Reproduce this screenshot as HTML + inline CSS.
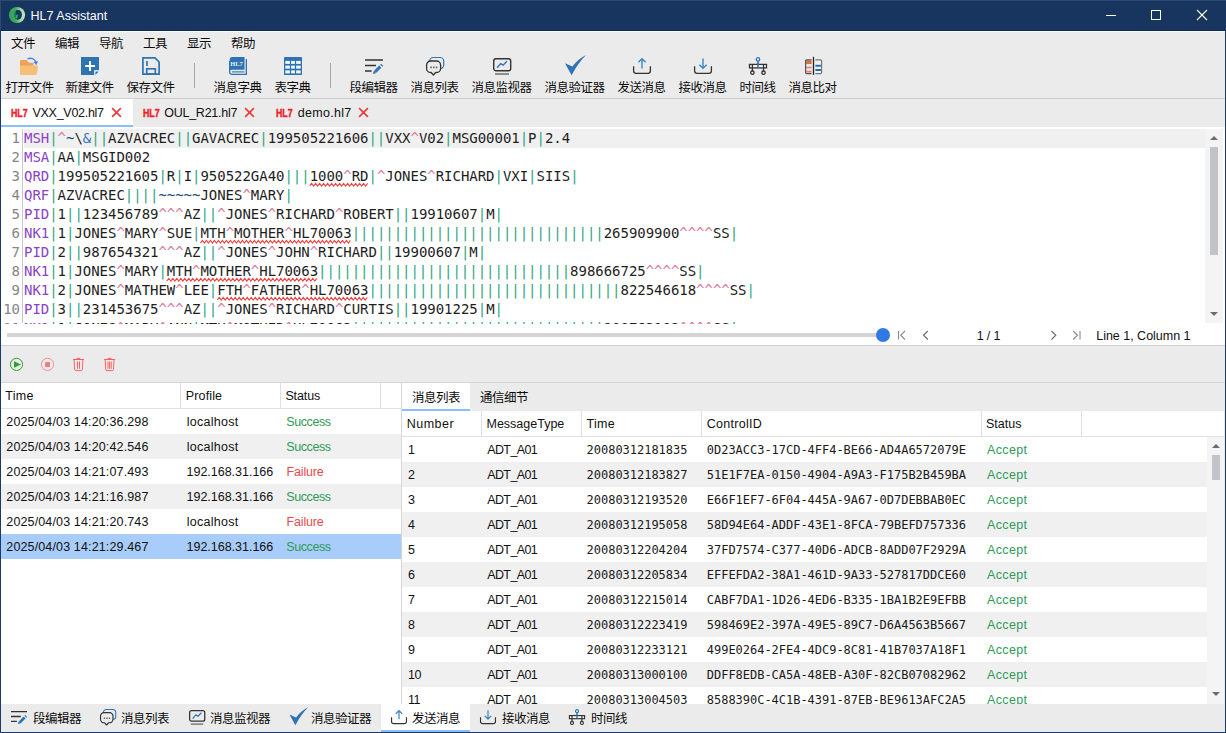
<!DOCTYPE html>
<html><head><meta charset="utf-8"><title>HL7 Assistant</title>
<style>
*{box-sizing:border-box;margin:0;padding:0}
html,body{width:1226px;height:733px;overflow:hidden;background:#ebebeb}
body{font-family:"Liberation Sans","Noto Sans CJK SC",sans-serif;font-size:12px;color:#111;position:relative}
.a{position:absolute}
#win{position:absolute;left:0;top:0;width:1226px;height:733px;background:#ebebeb;overflow:hidden}
#title{position:absolute;left:0;top:0;width:1226px;height:30px;background:#17355f;border-top:1px solid #2c4a74;border-left:1px solid #2c4a74}
.bl{position:absolute;left:0;top:30px;width:1px;height:703px;background:#1b3a66}
.br{position:absolute;left:1225px;top:30px;width:1px;height:703px;background:#1b3a66}
.bb{position:absolute;left:0;top:732px;width:1226px;height:1px;background:#1b3a66}
.cj{position:absolute;font-family:"Liberation Sans","Noto Sans CJK SC",sans-serif;font-size:12.500px;letter-spacing:-.5px;line-height:16px;white-space:nowrap;color:#0c0c0c;font-weight:400}
.sep{position:absolute;top:63px;width:1px;height:25px;background:#a8a8a8}
.x{position:absolute;font-family:"Liberation Sans",sans-serif;font-size:12.500px;line-height:15px;white-space:pre;color:#111}
.hl{position:absolute;top:106.500px;font-family:"Liberation Sans",sans-serif;font-weight:bold;color:#e9242c;font-size:11px;line-height:13px;transform-origin:0 50%;transform:scaleX(.8);white-space:nowrap;-webkit-text-stroke:.45px #e9242c}
#ed{position:absolute;left:1px;top:127px;width:1224px;height:218px;background:#fff;overflow:hidden}
#edc{position:absolute;left:0;top:0;width:1204px;height:197px;overflow:hidden}
.ln{position:absolute;left:0;height:19px;white-space:pre;font-family:"DejaVu Sans Mono","Liberation Mono",monospace;font-size:14px;letter-spacing:-.029px;line-height:19px;color:#1e1e1e}
.ln .n{position:absolute;left:0;width:19px;text-align:right;color:#858585;top:0}
.ln .c{position:absolute;left:23px;top:0}
.sg{color:#8a42c6}.p{color:#2ea67f}.k{color:#dc7a9f}.t{color:#23506e}.am{color:#3a6fc4}
.mono{position:absolute;font-family:"DejaVu Sans Mono","Liberation Mono",monospace;font-size:12px;letter-spacing:-.025px;line-height:15px;white-space:pre;color:#1a1a1a}
.ok{color:#2f9a58}.bad{color:#ea4a50}
.vd{position:absolute;width:1px;background:#e0e0e0}
</style></head><body>
<div id="win">
<div id="title"></div>
<svg class="a" style="left:8px;top:6px" width="18" height="18" viewBox="0 0 18 18"><defs><linearGradient id="tg" x1="0" y1="0" x2="1" y2="0"><stop offset="0" stop-color="#2f9f58"/><stop offset=".45" stop-color="#43ad62"/><stop offset=".75" stop-color="#a5dcae"/><stop offset="1" stop-color="#c4e9c6"/></linearGradient></defs><circle cx="9" cy="9" r="8.100" fill="url(#tg)"/><ellipse cx="9.900" cy="8.800" rx="4" ry="4.900" fill="#17355f"/><path d="M6.900 5V11.800H7.900M8.300 9.300H10.300M8.500 9.300V12.600M8.500 10.900H9.900" stroke="#2fae55" stroke-width="1.100" fill="none"/></svg>
<div class="x " style="left:30.5px;top:9px;letter-spacing:0.03px;color:#fff;">HL7 Assistant</div>
<svg class="a" style="left:1100px;top:0" width="126" height="30" viewBox="0 0 126 30"><path d="M6 15.500h10" stroke="#fff" stroke-width="1"/><rect x="51.500" y="10.500" width="9" height="9" fill="none" stroke="#fff" stroke-width="1"/><path d="M97 10l10 10M107 10l-10 10" stroke="#fff" stroke-width="1.100"/></svg>
<div class="a" style="left:0;top:30px;width:1226px;height:1px;background:#0c2c5a"></div><div class="a" style="left:1px;top:31px;width:1224px;height:1px;background:#f7f7f7"></div>
<div class="bl"></div><div class="br"></div><div class="bb"></div>
<div class="cj" style="left:11px;top:36px">文件</div>
<div class="cj" style="left:55px;top:36px">编辑</div>
<div class="cj" style="left:99px;top:36px">导航</div>
<div class="cj" style="left:143px;top:36px">工具</div>
<div class="cj" style="left:187px;top:36px">显示</div>
<div class="cj" style="left:231px;top:36px">帮助</div>
<div class="cj" style="left:5.5px;top:80px">打开文件</div>
<div class="cj" style="left:65.5px;top:80px">新建文件</div>
<div class="cj" style="left:126.5px;top:80px">保存文件</div>
<div class="cj" style="left:213.5px;top:80px">消息字典</div>
<div class="cj" style="left:274.5px;top:80px">表字典</div>
<div class="cj" style="left:349.5px;top:80px">段编辑器</div>
<div class="cj" style="left:410.5px;top:80px">消息列表</div>
<div class="cj" style="left:471.5px;top:80px">消息监视器</div>
<div class="cj" style="left:544.5px;top:80px">消息验证器</div>
<div class="cj" style="left:617.5px;top:80px">发送消息</div>
<div class="cj" style="left:678.5px;top:80px">接收消息</div>
<div class="cj" style="left:739.5px;top:80px">时间线</div>
<div class="cj" style="left:788.5px;top:80px">消息比对</div>
<div class="sep" style="left:194px"></div><div class="sep" style="left:330px"></div>
<svg class="a" style="left:0;top:0" width="1226" height="100" viewBox="0 0 1226 100"><g transform="translate(20 57)"><path d="M0 4.2a1.2 1.2 0 0 1 1.2-1.2H6.6L9 5.8H13.600V10H0Z" fill="#f0a256"/><path d="M0 9.400a1 1 0 0 1 1-1H17a1 1 0 0 1 1 1.200L16.800 17a1.200 1.200 0 0 1-1.200 1H1.200A1.200 1.200 0 0 1 0 16.800Z" fill="#f5bf77"/><path d="M7.500 2C10.500.400 15 1.200 16 5.600" fill="none" stroke="#3b82f6" stroke-width="1.400"/><path d="M13.600 4.800L16.300 8.200 18 4.200Z" fill="#3b82f6"/></g><g transform="translate(81 57)"><path d="M0 0H18V18H0Z" fill="#2e74b0"/><path d="M13.200 13.200H18V18H13.200Z" fill="#fff"/><path d="M14.400 14.400H18L14.400 18Z" fill="#2e74b0"/><path d="M18 15.200V18H15.200Z" fill="#ebebeb"/><path d="M4.200 9H14M9 4.100V13.900" stroke="#fff" stroke-width="2" fill="none"/></g><g transform="translate(142 57)"><path d="M.9.900H13L17.100 5V17.100H.9Z" fill="none" stroke="#2e74b5" stroke-width="1.700"/><path d="M5 4V9" stroke="#2e74b5" stroke-width="1.700"/><rect x="4.700" y="11.800" width="8.600" height="5.300" fill="none" stroke="#2e74b5" stroke-width="1.700"/></g><g transform="translate(229 57)"><path d="M2.500 0H15.500V12.800H2.800A2 2 0 0 0 .700 14.800V2.500A2.500 2.500 0 0 1 2.500 0Z" fill="#2e74b5"/><path d="M.650 4V15A2.300 2.300 0 0 0 2.950 17.350H17.350V2" fill="none" stroke="#2e74b5" stroke-width="1.300"/><path d="M3 14.900H15.500" stroke="#2e74b5" stroke-width="1.100"/><text x="1.300" y="8.700" font-family="Liberation Serif,serif" font-weight="bold" font-size="6.400" fill="#e8eef6" textLength="12.500" lengthAdjust="spacingAndGlyphs">HL7</text></g><g transform="translate(284 57)"><rect x="0" y="0" width="18" height="18" rx=".6" fill="#2e74b5"/><rect x="1.3" y="3.9" width="4.6" height="3" fill="#f4f7fb"/><rect x="1.3" y="8.6" width="4.6" height="3" fill="#f4f7fb"/><rect x="1.3" y="13.4" width="4.6" height="3" fill="#f4f7fb"/><rect x="7.1" y="3.9" width="3.8" height="3" fill="#f4f7fb"/><rect x="7.1" y="8.6" width="3.8" height="3" fill="#f4f7fb"/><rect x="7.1" y="13.4" width="3.8" height="3" fill="#f4f7fb"/><rect x="12.1" y="3.9" width="4.6" height="3" fill="#f4f7fb"/><rect x="12.1" y="8.6" width="4.6" height="3" fill="#f4f7fb"/><rect x="12.1" y="13.4" width="4.6" height="3" fill="#f4f7fb"/></g><g transform="translate(365 57)"><path d="M0 3H18M0 8.400H11M0 14H6.600" stroke="#333" stroke-width="1.500" fill="none"/><path d="M9.900 15L15.300 9.600" stroke="#2e74b5" stroke-width="3" fill="none"/><path d="M16.200 8.700L17.100 7.800" stroke="#2e74b5" stroke-width="3" fill="none"/><path d="M7.900 17L8.700 13.900 11 16.200Z" fill="#2e74b5"/></g><g transform="translate(426 57)"><rect x="3.700" y=".5" width="14" height="11.200" rx="3.600" fill="none" stroke="#2e74b5" stroke-width="1.200"/><path d="M4.600 4H10.600A4 4 0 0 1 14.600 8V11.500A4 4 0 0 1 10.600 15.500H9.600L7.400 18 5.200 15.500H4.600A4 4 0 0 1 .6 11.500V8A4 4 0 0 1 4.600 4Z" fill="#ebebeb" stroke="#333" stroke-width="1.300" stroke-linejoin="round"/><path d="M4.200 9.600h1.600v1.600h-1.600zM7 9.600h1.600v1.600H7zM9.800 9.600h1.600v1.600H9.800z" fill="#666"/></g><g transform="translate(493 57)"><rect x=".7" y="1.700" width="17" height="12" rx="2.200" fill="none" stroke="#333" stroke-width="1.400"/><path d="M2 17H16" stroke="#777" stroke-width="1.600"/><path d="M4.100 10.800L7.700 6.600 10.200 8.200 13.900 4.200" fill="none" stroke="#2e74b5" stroke-width="1.400"/></g><g transform="translate(565 57)"><path d="M0 6.300L7.400 9.500Q13 2 21-2Q13 6 6.600 18.200Z" fill="#2e74b5"/></g><g transform="translate(633 57)"><path d="M9 11.500V1.800M5.400 5.300L9 1.700 12.600 5.300" fill="none" stroke="#3f86c6" stroke-width="1.400"/><path d="M.6 9.300V14Q.6 16.400 3.200 16.400H14.800Q17.400 16.400 17.400 14V9.300" fill="none" stroke="#333" stroke-width="1.300"/></g><g transform="translate(694 57)"><path d="M9 1.500V11.200M5.400 7.700L9 11.300 12.600 7.700" fill="none" stroke="#3f86c6" stroke-width="1.400"/><path d="M.6 9.300V14Q.6 16.400 3.200 16.400H14.800Q17.400 16.400 17.400 14V9.300" fill="none" stroke="#333" stroke-width="1.300"/></g><g transform="translate(749 57)"><circle cx="9" cy="2.400" r="1.700" fill="none" stroke="#2e74b5" stroke-width="1.300"/><path d="M9 4.200V8.500" stroke="#2e74b5" stroke-width="1.600"/><rect x=".5" y="7.400" width="17" height="3.500" fill="#f6f6f6" stroke="#333" stroke-width="1.300"/><path d="M3.400 7.400V13.900M14.500 7.400V13.900" stroke="#333" stroke-width="1.300"/><path d="M9 7V10" stroke="#2e74b5" stroke-width="1.600"/><circle cx="3.400" cy="15.700" r="1.700" fill="none" stroke="#333" stroke-width="1.300"/><circle cx="14.500" cy="15.700" r="1.700" fill="none" stroke="#333" stroke-width="1.300"/></g><g transform="translate(805 57)"><path d="M8.500-.2V17.800" stroke="#222" stroke-width="1.300"/><rect x="1.200" y="3.500" width="5.400" height="3.700" fill="#d9713e"/><rect x="1.200" y="7.300" width="5.400" height="2.300" fill="#e6eef0"/><rect x="1.200" y="9.700" width="5.400" height="1.800" fill="#f07a6e"/><rect x="1.200" y="11.600" width="5.400" height="2" fill="#e6eef0"/><rect x="1.200" y="13.700" width="5.400" height="1.800" fill="#f07a6e"/><rect x="10.400" y="3.500" width="5.500" height="4.200" fill="#eef2f4"/><rect x="10.400" y="7.800" width="5.500" height="2" fill="#1f6fb5"/><rect x="10.400" y="9.900" width="5.500" height="2" fill="#eef2f4"/><rect x="10.400" y="12" width="5.500" height="2" fill="#1f6fb5"/><rect x="10.400" y="14.100" width="5.500" height="1.900" fill="#eef2f4"/><path d="M6.600 2.900H1.600Q.6 2.900.6 3.900V15.600Q.6 16.600 1.600 16.600H6.600" fill="none" stroke="#555" stroke-width="1.200"/><path d="M10.400 2.900H15.600Q16.600 2.900 16.600 3.900V15.600Q16.600 16.600 15.600 16.600H10.400" fill="none" stroke="#777" stroke-width="1.200"/></g></svg>
<div class="a" style="left:1px;top:98px;width:1224px;height:1px;background:#d0d0d0"></div>
<div class="a" style="left:1px;top:99px;width:132px;height:28px;background:#fff"></div>
<div class="a" style="left:1px;top:125px;width:132px;height:2px;background:#8dbff7"></div>
<div class="hl" style="left:10.5px">HL7</div>
<div class="x " style="left:32.5px;top:106px;letter-spacing:-0.28px;">VXX_V02.hl7</div>
<svg class="a" style="left:110.5px;top:107px" width="11" height="11" viewBox="0 0 11 11"><path d="M1.100 1.100l8.800 8.800M9.900 1.100l-8.800 8.800" stroke="#f03a3a" stroke-width="1.600" fill="none"/></svg>
<div class="hl" style="left:142.5px">HL7</div>
<div class="x " style="left:164.3px;top:106px;letter-spacing:-0.27px;">OUL_R21.hl7</div>
<svg class="a" style="left:243.7px;top:107px" width="11" height="11" viewBox="0 0 11 11"><path d="M1.100 1.100l8.800 8.800M9.900 1.100l-8.800 8.800" stroke="#f03a3a" stroke-width="1.600" fill="none"/></svg>
<div class="hl" style="left:275.5px">HL7</div>
<div class="x " style="left:297.8px;top:106px;letter-spacing:0.28px;">demo.hl7</div>
<svg class="a" style="left:357.8px;top:107px" width="11" height="11" viewBox="0 0 11 11"><path d="M1.100 1.100l8.800 8.800M9.900 1.100l-8.800 8.800" stroke="#f03a3a" stroke-width="1.600" fill="none"/></svg>
<div id="ed">
<div class="a" style="left:23px;top:2px;width:1181px;height:19px;background:#f0f0f0"></div>
<div id="edc">
<div class="a" style="left:21px;top:2px;width:1px;height:194px;background:#c8c8c8"></div>
<div class="ln" style="top:2px"><span class="n">1</span><span class="c"><span class="sg">MSH</span><span class="p">|</span><span class="k">^</span><span class="t">~</span>\<span class="am">&amp;</span><span class="p">||</span>AZVACREC<span class="p">||</span>GAVACREC<span class="p">|</span>199505221606<span class="p">||</span>VXX<span class="k">^</span>V02<span class="p">|</span>MSG00001<span class="p">|</span>P<span class="p">|</span>2.4</span></div>
<div class="ln" style="top:21px"><span class="n">2</span><span class="c"><span class="sg">MSA</span><span class="p">|</span>AA<span class="p">|</span>MSGID002</span></div>
<div class="ln" style="top:40px"><span class="n">3</span><span class="c"><span class="sg">QRD</span><span class="p">|</span>199505221605<span class="p">|</span>R<span class="p">|</span>I<span class="p">|</span>950522GA40<span class="p">|||</span><span>1000<span class="k">^</span>RD</span><span class="p">|</span><span class="k">^</span>JONES<span class="k">^</span>RICHARD<span class="p">|</span>VXI<span class="p">|</span>SIIS<span class="p">|</span></span></div>
<div class="ln" style="top:59px"><span class="n">4</span><span class="c"><span class="sg">QRF</span><span class="p">|</span>AZVACREC<span class="p">||||</span><span class="t">~~~~~</span>JONES<span class="k">^</span>MARY<span class="p">|</span></span></div>
<div class="ln" style="top:78px"><span class="n">5</span><span class="c"><span class="sg">PID</span><span class="p">|</span>1<span class="p">||</span>123456789<span class="k">^^^</span>AZ<span class="p">||</span><span class="k">^</span>JONES<span class="k">^</span>RICHARD<span class="k">^</span>ROBERT<span class="p">||</span>19910607<span class="p">|</span>M<span class="p">|</span></span></div>
<div class="ln" style="top:97px"><span class="n">6</span><span class="c"><span class="sg">NK1</span><span class="p">|</span>1<span class="p">|</span>JONES<span class="k">^</span>MARY<span class="k">^</span>SUE<span class="p">|</span><span>MTH<span class="k">^</span>MOTHER<span class="k">^</span>HL70063</span><span class="p">||||||||||||||||||||||||||||||</span>265909900<span class="k">^^^^</span>SS<span class="p">|</span></span></div>
<div class="ln" style="top:116px"><span class="n">7</span><span class="c"><span class="sg">PID</span><span class="p">|</span>2<span class="p">||</span>987654321<span class="k">^^^</span>AZ<span class="p">||</span><span class="k">^</span>JONES<span class="k">^</span>JOHN<span class="k">^</span>RICHARD<span class="p">||</span>19900607<span class="p">|</span>M<span class="p">|</span></span></div>
<div class="ln" style="top:135px"><span class="n">8</span><span class="c"><span class="sg">NK1</span><span class="p">|</span>1<span class="p">|</span>JONES<span class="k">^</span>MARY<span class="p">|</span><span>MTH<span class="k">^</span>MOTHER<span class="k">^</span>HL70063</span><span class="p">||||||||||||||||||||||||||||||</span>898666725<span class="k">^^^^</span>SS<span class="p">|</span></span></div>
<div class="ln" style="top:154px"><span class="n">9</span><span class="c"><span class="sg">NK1</span><span class="p">|</span>2<span class="p">|</span>JONES<span class="k">^</span>MATHEW<span class="k">^</span>LEE<span class="p">|</span><span>FTH<span class="k">^</span>FATHER<span class="k">^</span>HL70063</span><span class="p">||||||||||||||||||||||||||||||</span>822546618<span class="k">^^^^</span>SS<span class="p">|</span></span></div>
<div class="ln" style="top:173px"><span class="n">10</span><span class="c"><span class="sg">PID</span><span class="p">|</span>3<span class="p">||</span>231453675<span class="k">^^^</span>AZ<span class="p">||</span><span class="k">^</span>JONES<span class="k">^</span>RICHARD<span class="k">^</span>CURTIS<span class="p">||</span>19901225<span class="p">|</span>M<span class="p">|</span></span></div>
<div class="ln" style="top:192px"><span class="n">11</span><span class="c"><span class="sg">NK1</span><span class="p">|</span>1<span class="p">|</span>JONES<span class="k">^</span>MARY<span class="k">^</span>ANN<span class="p">|</span><span>MTH<span class="k">^</span>MOTHER<span class="k">^</span>HL70063</span><span class="p">||||||||||||||||||||||||||||||</span>288763102<span class="k">^^^^</span>SS<span class="p">|</span></span></div>
<svg class="a" style="left:0;top:0" width="1207" height="196" viewBox="0 0 1207 196"><path d="M308.6 59L310.6 56.4L312.6 59L314.6 56.4L316.6 59L318.6 56.4L320.6 59L322.6 56.4L324.6 59L326.6 56.4L328.6 59L330.6 56.4L332.6 59L334.6 56.4L336.6 59L338.6 56.4L340.6 59L342.6 56.4L344.6 59L346.6 56.4L348.6 59L350.6 56.4L352.6 59L354.6 56.4L356.6 59L358.6 56.4L360.6 59L362.6 56.4L364.6 59L366.6 56.4" fill="none" stroke="#f04040" stroke-width="1.100"/><path d="M199.4 116L201.4 113.4L203.4 116L205.4 113.4L207.4 116L209.4 113.4L211.4 116L213.4 113.4L215.4 116L217.4 113.4L219.4 116L221.4 113.4L223.4 116L225.4 113.4L227.4 116L229.4 113.4L231.4 116L233.4 113.4L235.4 116L237.4 113.4L239.4 116L241.4 113.4L243.4 116L245.4 113.4L247.4 116L249.4 113.4L251.4 116L253.4 113.4L255.4 116L257.4 113.4L259.4 116L261.4 113.4L263.4 116L265.4 113.4L267.4 116L269.4 113.4L271.4 116L273.4 113.4L275.4 116L277.4 113.4L279.4 116L281.4 113.4L283.4 116L285.4 113.4L287.4 116L289.4 113.4L291.4 116L293.4 113.4L295.4 116L297.4 113.4L299.4 116L301.4 113.4L303.4 116L305.4 113.4L307.4 116L309.4 113.4L311.4 116L313.4 113.4L315.4 116L317.4 113.4L319.4 116L321.4 113.4L323.4 116L325.4 113.4L327.4 116L329.4 113.4L331.4 116L333.4 113.4L335.4 116L337.4 113.4L339.4 116L341.4 113.4L343.4 116L345.4 113.4L347.4 116L349.4 113.4" fill="none" stroke="#f04040" stroke-width="1.100"/><path d="M165.8 154L167.8 151.4L169.8 154L171.8 151.4L173.8 154L175.8 151.4L177.8 154L179.8 151.4L181.8 154L183.8 151.4L185.8 154L187.8 151.4L189.8 154L191.8 151.4L193.8 154L195.8 151.4L197.8 154L199.8 151.4L201.8 154L203.8 151.4L205.8 154L207.8 151.4L209.8 154L211.8 151.4L213.8 154L215.8 151.4L217.8 154L219.8 151.4L221.8 154L223.8 151.4L225.8 154L227.8 151.4L229.8 154L231.8 151.4L233.8 154L235.8 151.4L237.8 154L239.8 151.4L241.8 154L243.8 151.4L245.8 154L247.8 151.4L249.8 154L251.8 151.4L253.8 154L255.8 151.4L257.8 154L259.8 151.4L261.8 154L263.8 151.4L265.8 154L267.8 151.4L269.8 154L271.8 151.4L273.8 154L275.8 151.4L277.8 154L279.8 151.4L281.8 154L283.8 151.4L285.8 154L287.8 151.4L289.8 154L291.8 151.4L293.8 154L295.8 151.4L297.8 154L299.8 151.4L301.8 154L303.8 151.4L305.8 154L307.8 151.4L309.8 154L311.8 151.4L313.8 154L315.8 151.4" fill="none" stroke="#f04040" stroke-width="1.100"/><path d="M216.2 173L218.2 170.4L220.2 173L222.2 170.4L224.2 173L226.2 170.4L228.2 173L230.2 170.4L232.2 173L234.2 170.4L236.2 173L238.2 170.4L240.2 173L242.2 170.4L244.2 173L246.2 170.4L248.2 173L250.2 170.4L252.2 173L254.2 170.4L256.2 173L258.2 170.4L260.2 173L262.2 170.4L264.2 173L266.2 170.4L268.2 173L270.2 170.4L272.2 173L274.2 170.4L276.2 173L278.2 170.4L280.2 173L282.2 170.4L284.2 173L286.2 170.4L288.2 173L290.2 170.4L292.2 173L294.2 170.4L296.2 173L298.2 170.4L300.2 173L302.2 170.4L304.2 173L306.2 170.4L308.2 173L310.2 170.4L312.2 173L314.2 170.4L316.2 173L318.2 170.4L320.2 173L322.2 170.4L324.2 173L326.2 170.4L328.2 173L330.2 170.4L332.2 173L334.2 170.4L336.2 173L338.2 170.4L340.2 173L342.2 170.4L344.2 173L346.2 170.4L348.2 173L350.2 170.4L352.2 173L354.2 170.4L356.2 173L358.2 170.4L360.2 173L362.2 170.4L364.2 173L366.2 170.4" fill="none" stroke="#f04040" stroke-width="1.100"/></svg>
</div>
<div class="a" style="left:1204px;top:2px;width:18px;height:194px;background:#f4f4f4"></div>
<svg class="a" style="left:1204px;top:2px" width="18" height="194" viewBox="0 0 18 194"><path d="M5 11l4-4 4 4z" fill="#6c6c6c"/><path d="M5 183l4 4 4-4z" fill="#6c6c6c"/><rect x="5" y="18" width="8" height="108" fill="#c2c3c9"/></svg>
<div class="a" style="left:6px;top:206px;width:876px;height:4px;background:#d4d4d4"></div>
<div class="a" style="left:875px;top:201px;width:14px;height:14px;border-radius:7px;background:#2f78e6"></div>
<svg class="a" style="left:889px;top:200px" width="200" height="18" viewBox="890 327 200 18" fill="none" stroke-width="1.100"><path d="M898.500 331v8.500M905 331l-4.300 4.250 4.300 4.250" stroke="#8a8a8a"/><path d="M927.800 331l-4.300 4.250 4.300 4.250" stroke="#6a6a6a"/><path d="M1051.500 331l4.300 4.250-4.300 4.250" stroke="#6a6a6a"/><path d="M1073.200 331l4.300 4.250-4.300 4.250M1080 331v8.500" stroke="#8a8a8a"/></svg>
</div>
<div class="x " style="left:976.8px;top:329px;letter-spacing:-0.18px;">1 / 1</div>
<div class="x " style="left:1096.2px;top:329px;letter-spacing:-0.01px;">Line 1, Column 1</div>
<div class="a" style="left:1px;top:345px;width:1224px;height:1px;background:#d0d0d0"></div>
<svg class="a" style="left:1px;top:355px" width="130" height="20" viewBox="0 0 130 20" fill="none"><circle cx="15.500" cy="9.400" r="6.100" stroke="#2ca02c" stroke-width="1"/><path d="M13 6.200V12.700L20 9.450z" fill="#2ca02c"/><circle cx="46.500" cy="9.400" r="6.100" stroke="#f29090" stroke-width="1"/><rect x="44.100" y="7.100" width="4.900" height="4.900" fill="#ee7c7c"/><g stroke="#ff4040" stroke-width=".8"><path d="M72 4.500H83M76 4.500V3.400H79V4.500M73.100 4.500L73.600 14.400Q73.700 15.600 74.900 15.600H80.100Q81.300 15.600 81.400 14.400L81.900 4.500M76.500 6.500V13.800M78.500 6.500V13.800"/><path d="M103.100 4.500H114.100M107.100 4.500V3.400H110.100V4.500M104.200 4.500L104.700 14.400Q104.800 15.600 106 15.600H111.200Q112.400 15.600 112.500 14.400L113 4.500M107 6.500V13.800M108.600 6.500V13.800M110.200 6.500V13.800"/></g></svg>
<div class="a" style="left:1px;top:382px;width:1224px;height:1px;background:#d6d6d6"></div>
<div class="a" style="left:1px;top:383px;width:400px;height:321px;background:#fff"></div>
<div class="a" style="left:401px;top:383px;width:1px;height:321px;background:#d6d6d6"></div>
<div class="a" style="left:1px;top:408px;width:400px;height:1px;background:#e0e0e0"></div>
<div class="vd" style="left:180px;top:383px;height:25px"></div>
<div class="vd" style="left:280px;top:383px;height:25px"></div>
<div class="vd" style="left:380px;top:383px;height:25px"></div>
<div class="x " style="left:5.2px;top:389px;letter-spacing:0.3px;">Time</div>
<div class="x " style="left:185.8px;top:389px;letter-spacing:0.14px;">Profile</div>
<div class="x " style="left:285.4px;top:389px;letter-spacing:-0.11px;">Status</div>
<div class="x " style="left:6.3px;top:415px;letter-spacing:0.14px;">2025/04/03 14:20:36.298</div>
<div class="x " style="left:186.7px;top:415px;letter-spacing:0.28px;">localhost</div>
<div class="x ok" style="left:286.3px;top:415px;letter-spacing:-0.41px;">Success</div>
<div class="a" style="left:1px;top:434px;width:400px;height:25px;background:#f0f0f0"></div>
<div class="x " style="left:6.3px;top:440px;letter-spacing:0.14px;">2025/04/03 14:20:42.546</div>
<div class="x " style="left:186.7px;top:440px;letter-spacing:0.28px;">localhost</div>
<div class="x ok" style="left:286.3px;top:440px;letter-spacing:-0.41px;">Success</div>
<div class="x " style="left:6.3px;top:465px;letter-spacing:0.14px;">2025/04/03 14:21:07.493</div>
<div class="x " style="left:186.5px;top:465px;letter-spacing:-0.01px;">192.168.31.166</div>
<div class="x bad" style="left:286.5px;top:465px;letter-spacing:-0.15px;">Failure</div>
<div class="a" style="left:1px;top:484px;width:400px;height:25px;background:#f0f0f0"></div>
<div class="x " style="left:6.3px;top:490px;letter-spacing:0.14px;">2025/04/03 14:21:16.987</div>
<div class="x " style="left:186.5px;top:490px;letter-spacing:-0.01px;">192.168.31.166</div>
<div class="x ok" style="left:286.3px;top:490px;letter-spacing:-0.41px;">Success</div>
<div class="x " style="left:6.3px;top:515px;letter-spacing:0.14px;">2025/04/03 14:21:20.743</div>
<div class="x " style="left:186.7px;top:515px;letter-spacing:0.28px;">localhost</div>
<div class="x bad" style="left:286.5px;top:515px;letter-spacing:-0.15px;">Failure</div>
<div class="a" style="left:1px;top:534px;width:400px;height:25px;background:#a8cdfa"></div>
<div class="x " style="left:6.3px;top:540px;letter-spacing:0.14px;">2025/04/03 14:21:29.467</div>
<div class="x " style="left:186.5px;top:540px;letter-spacing:-0.01px;">192.168.31.166</div>
<div class="x ok" style="left:286.3px;top:540px;letter-spacing:-0.41px;">Success</div>
<div class="a" style="left:402px;top:383px;width:68px;height:28px;background:#fff"></div>
<div class="a" style="left:402px;top:409px;width:68px;height:2px;background:#8dbff7"></div>
<div class="cj" style="left:412px;top:390px">消息列表</div>
<div class="cj" style="left:480px;top:390px">通信细节</div>
<div class="a" style="left:402px;top:411px;width:822px;height:293px;background:#fff"></div>
<div class="a" style="left:402px;top:436px;width:822px;height:1px;background:#e0e0e0"></div>
<div class="vd" style="left:481px;top:411px;height:25px"></div>
<div class="vd" style="left:581px;top:411px;height:25px"></div>
<div class="vd" style="left:701px;top:411px;height:25px"></div>
<div class="vd" style="left:981px;top:411px;height:25px"></div>
<div class="vd" style="left:1081px;top:411px;height:25px"></div>
<div class="x " style="left:406.7px;top:417px;letter-spacing:0.51px;">Number</div>
<div class="x " style="left:486.5px;top:417px;">MessageType</div>
<div class="x " style="left:586.6px;top:417px;letter-spacing:0.26px;">Time</div>
<div class="x " style="left:706.7px;top:417px;letter-spacing:0.29px;">ControlID</div>
<div class="x " style="left:986px;top:417px;letter-spacing:0.01px;">Status</div>
<div class="a" style="left:402px;top:437px;width:822px;height:267px;overflow:hidden">
<div class="a" style="left:805px;top:0;width:18px;height:267px;background:#f4f4f4"></div>
<svg class="a" style="left:805px;top:0" width="18" height="267" viewBox="0 0 18 267"><path d="M5 11l4-4 4 4z" fill="#6c6c6c"/><path d="M5 255l4 4 4-4z" fill="#6c6c6c"/><rect x="5" y="18" width="8" height="25" fill="#c2c3c9"/></svg>
<div class="x " style="left:6px;top:6px;letter-spacing:-0.4px;">1</div>
<div class="x " style="left:85.2px;top:6px;letter-spacing:-0.6px;">ADT_A01</div>
<div class="mono" style="left:184.600px;top:6px">20080312181835</div><div class="mono" style="left:304.800px;top:6px">0D23ACC3-17CD-4FF4-BE66-AD4A6572079E</div>
<div class="x ok" style="left:585.1px;top:6px;letter-spacing:0.34px;">Accept</div>
<div class="a" style="left:0;top:25px;width:805px;height:25px;background:#f0f0f0"></div>
<div class="x " style="left:6px;top:31px;letter-spacing:-0.4px;">2</div>
<div class="x " style="left:85.2px;top:31px;letter-spacing:-0.6px;">ADT_A01</div>
<div class="mono" style="left:184.600px;top:31px">20080312183827</div><div class="mono" style="left:304.800px;top:31px">51E1F7EA-0150-4904-A9A3-F175B2B459BA</div>
<div class="x ok" style="left:585.1px;top:31px;letter-spacing:0.34px;">Accept</div>
<div class="x " style="left:6px;top:56px;letter-spacing:-0.4px;">3</div>
<div class="x " style="left:85.2px;top:56px;letter-spacing:-0.6px;">ADT_A01</div>
<div class="mono" style="left:184.600px;top:56px">20080312193520</div><div class="mono" style="left:304.800px;top:56px">E66F1EF7-6F04-445A-9A67-0D7DEBBAB0EC</div>
<div class="x ok" style="left:585.1px;top:56px;letter-spacing:0.34px;">Accept</div>
<div class="a" style="left:0;top:75px;width:805px;height:25px;background:#f0f0f0"></div>
<div class="x " style="left:6px;top:81px;letter-spacing:-0.4px;">4</div>
<div class="x " style="left:85.2px;top:81px;letter-spacing:-0.6px;">ADT_A01</div>
<div class="mono" style="left:184.600px;top:81px">20080312195058</div><div class="mono" style="left:304.800px;top:81px">58D94E64-ADDF-43E1-8FCA-79BEFD757336</div>
<div class="x ok" style="left:585.1px;top:81px;letter-spacing:0.34px;">Accept</div>
<div class="x " style="left:6px;top:106px;letter-spacing:-0.4px;">5</div>
<div class="x " style="left:85.2px;top:106px;letter-spacing:-0.6px;">ADT_A01</div>
<div class="mono" style="left:184.600px;top:106px">20080312204204</div><div class="mono" style="left:304.800px;top:106px">37FD7574-C377-40D6-ADCB-8ADD07F2929A</div>
<div class="x ok" style="left:585.1px;top:106px;letter-spacing:0.34px;">Accept</div>
<div class="a" style="left:0;top:125px;width:805px;height:25px;background:#f0f0f0"></div>
<div class="x " style="left:6px;top:131px;letter-spacing:-0.4px;">6</div>
<div class="x " style="left:85.2px;top:131px;letter-spacing:-0.6px;">ADT_A01</div>
<div class="mono" style="left:184.600px;top:131px">20080312205834</div><div class="mono" style="left:304.800px;top:131px">EFFEFDA2-38A1-461D-9A33-527817DDCE60</div>
<div class="x ok" style="left:585.1px;top:131px;letter-spacing:0.34px;">Accept</div>
<div class="x " style="left:6px;top:156px;letter-spacing:-0.4px;">7</div>
<div class="x " style="left:85.2px;top:156px;letter-spacing:-0.6px;">ADT_A01</div>
<div class="mono" style="left:184.600px;top:156px">20080312215014</div><div class="mono" style="left:304.800px;top:156px">CABF7DA1-1D26-4ED6-B335-1BA1B2E9EFBB</div>
<div class="x ok" style="left:585.1px;top:156px;letter-spacing:0.34px;">Accept</div>
<div class="a" style="left:0;top:175px;width:805px;height:25px;background:#f0f0f0"></div>
<div class="x " style="left:6px;top:181px;letter-spacing:-0.4px;">8</div>
<div class="x " style="left:85.2px;top:181px;letter-spacing:-0.6px;">ADT_A01</div>
<div class="mono" style="left:184.600px;top:181px">20080312223419</div><div class="mono" style="left:304.800px;top:181px">598469E2-397A-49E5-89C7-D6A4563B5667</div>
<div class="x ok" style="left:585.1px;top:181px;letter-spacing:0.34px;">Accept</div>
<div class="x " style="left:6px;top:206px;letter-spacing:-0.4px;">9</div>
<div class="x " style="left:85.2px;top:206px;letter-spacing:-0.6px;">ADT_A01</div>
<div class="mono" style="left:184.600px;top:206px">20080312233121</div><div class="mono" style="left:304.800px;top:206px">499E0264-2FE4-4DC9-8C81-41B7037A18F1</div>
<div class="x ok" style="left:585.1px;top:206px;letter-spacing:0.34px;">Accept</div>
<div class="a" style="left:0;top:225px;width:805px;height:25px;background:#f0f0f0"></div>
<div class="x " style="left:6px;top:231px;letter-spacing:-0.4px;">10</div>
<div class="x " style="left:85.2px;top:231px;letter-spacing:-0.6px;">ADT_A01</div>
<div class="mono" style="left:184.600px;top:231px">20080313000100</div><div class="mono" style="left:304.800px;top:231px">DDFF8EDB-CA5A-48EB-A30F-82CB07082962</div>
<div class="x ok" style="left:585.1px;top:231px;letter-spacing:0.34px;">Accept</div>
<div class="x " style="left:6px;top:256px;letter-spacing:-0.4px;">11</div>
<div class="x " style="left:85.2px;top:256px;letter-spacing:-0.6px;">ADT_A01</div>
<div class="mono" style="left:184.600px;top:256px">20080313004503</div><div class="mono" style="left:304.800px;top:256px">8588390C-4C1B-4391-87EB-BE9613AFC2A5</div>
<div class="x ok" style="left:585.1px;top:256px;letter-spacing:0.34px;">Accept</div>
</div>
<div class="a" style="left:1px;top:704px;width:1224px;height:28px;background:#ebebeb"></div>
<div class="a" style="left:381px;top:704px;width:89px;height:28px;background:#fff"></div>
<div class="a" style="left:381px;top:730px;width:89px;height:2px;background:#8dbff7"></div>
<div class="cj" style="left:33px;top:711px">段编辑器</div>
<div class="cj" style="left:121px;top:711px">消息列表</div>
<div class="cj" style="left:210px;top:711px">消息监视器</div>
<div class="cj" style="left:311px;top:711px">消息验证器</div>
<div class="cj" style="left:412px;top:711px">发送消息</div>
<div class="cj" style="left:502px;top:711px">接收消息</div>
<div class="cj" style="left:591px;top:711px">时间线</div>
<svg class="a" style="left:0;top:700px" width="1226" height="33" viewBox="0 700 1226 33"><g transform="translate(11 709) scale(0.8888888888888888)"><path d="M0 3H18M0 8.400H11M0 14H6.600" stroke="#333" stroke-width="1.500" fill="none"/><path d="M9.900 15L15.300 9.600" stroke="#2e74b5" stroke-width="3" fill="none"/><path d="M16.200 8.700L17.100 7.800" stroke="#2e74b5" stroke-width="3" fill="none"/><path d="M7.900 17L8.700 13.900 11 16.200Z" fill="#2e74b5"/></g><g transform="translate(100 709) scale(0.8888888888888888)"><rect x="3.700" y=".5" width="14" height="11.200" rx="3.600" fill="none" stroke="#2e74b5" stroke-width="1.200"/><path d="M4.600 4H10.600A4 4 0 0 1 14.600 8V11.500A4 4 0 0 1 10.600 15.500H9.600L7.400 18 5.200 15.500H4.600A4 4 0 0 1 .6 11.500V8A4 4 0 0 1 4.600 4Z" fill="#ebebeb" stroke="#333" stroke-width="1.300" stroke-linejoin="round"/><path d="M4.200 9.600h1.600v1.600h-1.600zM7 9.600h1.600v1.600H7zM9.800 9.600h1.600v1.600H9.800z" fill="#666"/></g><g transform="translate(189 709) scale(0.8888888888888888)"><rect x=".7" y="1.700" width="17" height="12" rx="2.200" fill="none" stroke="#333" stroke-width="1.400"/><path d="M2 17H16" stroke="#777" stroke-width="1.600"/><path d="M4.100 10.800L7.700 6.600 10.200 8.200 13.900 4.200" fill="none" stroke="#2e74b5" stroke-width="1.400"/></g><g transform="translate(289.5 709) scale(0.8888888888888888)"><path d="M0 6.300L7.400 9.500Q13 2 21-2Q13 6 6.600 18.200Z" fill="#2e74b5"/></g><g transform="translate(391 709) scale(0.8888888888888888)"><path d="M9 11.500V1.800M5.400 5.300L9 1.700 12.600 5.300" fill="none" stroke="#3f86c6" stroke-width="1.400"/><path d="M.6 9.300V14Q.6 16.400 3.200 16.400H14.800Q17.400 16.400 17.400 14V9.300" fill="none" stroke="#333" stroke-width="1.300"/></g><g transform="translate(480 709) scale(0.8888888888888888)"><path d="M9 1.500V11.200M5.400 7.700L9 11.300 12.600 7.700" fill="none" stroke="#3f86c6" stroke-width="1.400"/><path d="M.6 9.300V14Q.6 16.400 3.200 16.400H14.800Q17.400 16.400 17.400 14V9.300" fill="none" stroke="#333" stroke-width="1.300"/></g><g transform="translate(569 709) scale(0.8888888888888888)"><circle cx="9" cy="2.400" r="1.700" fill="none" stroke="#2e74b5" stroke-width="1.300"/><path d="M9 4.200V8.500" stroke="#2e74b5" stroke-width="1.600"/><rect x=".5" y="7.400" width="17" height="3.500" fill="#f6f6f6" stroke="#333" stroke-width="1.300"/><path d="M3.400 7.400V13.900M14.500 7.400V13.900" stroke="#333" stroke-width="1.300"/><path d="M9 7V10" stroke="#2e74b5" stroke-width="1.600"/><circle cx="3.400" cy="15.700" r="1.700" fill="none" stroke="#333" stroke-width="1.300"/><circle cx="14.500" cy="15.700" r="1.700" fill="none" stroke="#333" stroke-width="1.300"/></g></svg>
</div>
</body></html>
